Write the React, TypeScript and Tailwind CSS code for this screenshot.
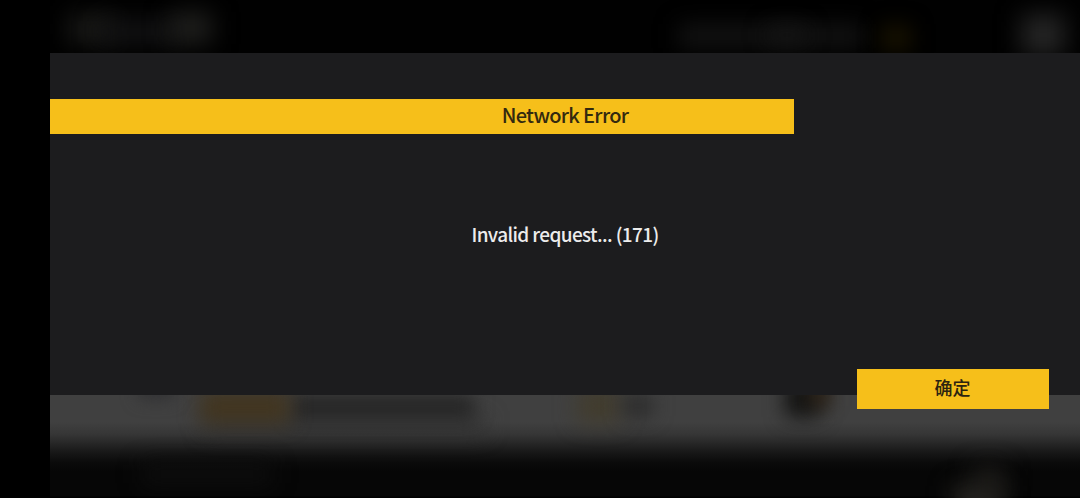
const glows = [
  // Header
  "left-[18px] top-[14px] h-[30px] w-[48px] bg-[#191917] blur-[12px]",
  "left-[50px] top-[20px] h-[24px] w-[80px] bg-[#131314] blur-[12px]",
  "left-[120px] top-[12px] h-[32px] w-[42px] bg-[#1f1f1d] blur-[12px]",
  "left-[628px] top-[24px] h-[24px] w-[186px] bg-[#121212] blur-[11px]",
  "left-[718px] top-[26px] h-[18px] w-[38px] bg-[#151515] blur-[11px]",
  "left-[830px] top-[24px] h-[28px] w-[32px] bg-[#151000] blur-[10px]",
  "left-[971px] top-[14px] h-[42px] w-[44px] bg-[#242424] blur-[12px]",
  // Lower bar
  "left-[88px] top-[380px] h-[20px] w-[36px] bg-[#323234] blur-[8px]",
  "left-[155px] top-[418px] h-[14px] w-[280px] bg-[#303030] blur-[11px]",
  "left-[240px] top-[396px] h-[22px] w-[184px] bg-[#242424] blur-[9px]",
  "left-[150px] top-[391px] h-[32px] w-[90px] bg-[#42351f] blur-[10px]",
  "left-[528px] top-[390px] h-[32px] w-[42px] bg-[#423c2c] blur-[11px]",
  "left-[574px] top-[396px] h-[20px] w-[28px] bg-[#282828] blur-[10px]",
  "left-[735px] top-[381px] h-[36px] w-[36px] bg-[#121211] blur-[10px]",
  "left-[760px] top-[386px] h-[20px] w-[20px] bg-[#2c2114] blur-[9px]",
  // Footer
  "left-[92px] top-[464px] h-[20px] w-[130px] bg-[#0e0e0e] blur-[11px]",
  "left-[904px] top-[486px] h-[28px] w-[48px] bg-[#2c2a26] blur-[12px]",
  "left-[924px] top-[468px] h-[24px] w-[30px] bg-[#1f1e1b] blur-[12px]",
];

const Backdrop = () => {
  return (
    <div className="absolute inset-0 overflow-hidden bg-[#010101]">
      <div className="mt-[380px] h-[118px] bg-[linear-gradient(to_bottom,#404040_0px,#404040_42px,#363636_54px,#292929_62px,#181818_72px,#0b0b0b_82px,#060606_92px,#060606_116px,#000_117px)]" />
      {glows.map((glow) => (
        <div key={glow} className={`absolute ${glow}`} />
      ))}
    </div>
  );
};

interface DialogProps {
  title: string;
  message: string;
  confirmLabel: string;
}

const Dialog = ({ title, message, confirmLabel }: DialogProps) => {
  return (
    <div
      role="alertdialog"
      className="relative mt-[53px] flex h-[341.5px] flex-col bg-[#1c1c1e] pt-[46px]"
    >
      <div className="flex h-[35px] w-[744px] shrink-0 bg-[#f6bf1a]">
        <h1 className="ml-[286px] flex w-[458px] items-center justify-center pb-[4px] text-[20px] font-medium tracking-[-0.66px] text-[#33290f]">
          {title}
        </h1>
      </div>
      <p className="mt-[85px] text-center text-[19px] leading-[30px] font-medium tracking-[-0.63px] text-[#ececec]">
        {message}
      </p>
      <button className="mt-[120px] mr-[31px] flex h-[39.5px] w-[192px] shrink-0 items-center justify-center self-end bg-[#f6bf1a] pr-[1px] pb-[2px] text-[18px] font-medium text-[#2c2410]">
        {confirmLabel}
      </button>
    </div>
  );
};

export default function App() {
  return (
    <main className="flex h-[498px] w-[1080px] overflow-hidden bg-black pl-[50px] font-['Noto_Sans_CJK_SC',sans-serif]">
      <div className="relative flex-1 overflow-hidden">
        <Backdrop />
        <Dialog
          title="Network Error"
          message="Invalid request... (171)"
          confirmLabel="确定"
        />
      </div>
    </main>
  );
}
